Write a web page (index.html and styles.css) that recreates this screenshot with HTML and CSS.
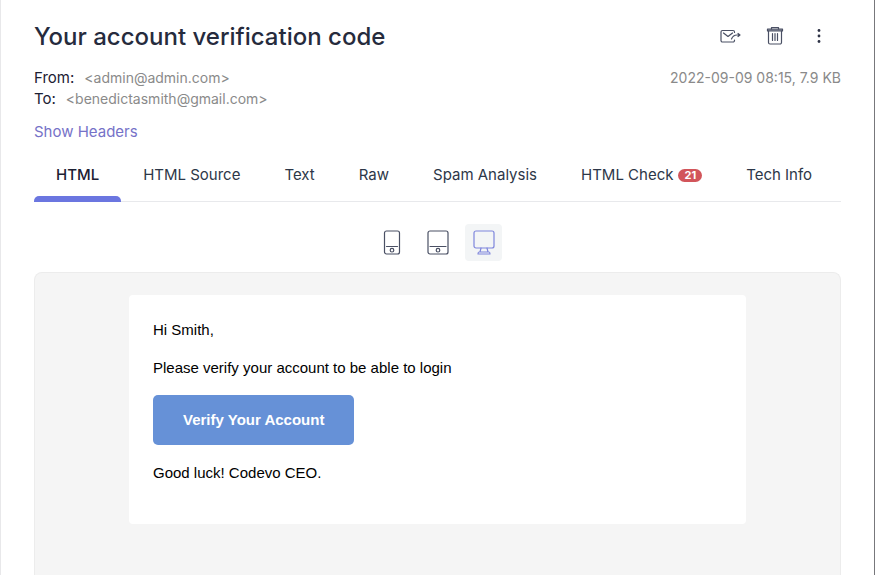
FILE: index.html
```html
<!DOCTYPE html>
<html lang="en">

<head>
    <meta charset="UTF-8">
    <meta name="viewport" content="width=device-width, initial-scale=1.0">
    <title>Your account verification code</title>
    <link rel="stylesheet" href="styles.css">
</head>

<body>
    <main class="message">
        <header class="message-header">
            <h1>Your account verification code</h1>
            <div class="actions">
                <button class="action" type="button" aria-label="Forward">
                    <svg width="22" height="16" viewBox="0 0 22 16">
                        <path d="M14.500 4.500V4a1.500 1.500 0 0 0-1.500-1.500H2.500A1.500 1.500 0 0 0 1 4v8.500A1.500 1.500 0 0 0 2.500 14H13a1.500 1.500 0 0 0 1.500-1.500V12" />
                        <path d="M3.500 5l4.500 3.500L12.500 5M11.500 11c1-2.500 2.500-4 5.500-4h2.500M18 5.500L20 7l-2 1.500" />
                    </svg>
                </button>
                <button class="action" type="button" aria-label="Delete">
                    <svg width="18" height="20" viewBox="0 0 18 20">
                        <path class="lid" d="M1.500 3h15v2h-15z" />
                        <path d="M5.500 3V1.500h7V3M2.500 5v11.500a1.500 1.500 0 0 0 1.500 1.500h10a1.500 1.500 0 0 0 1.500-1.500V5" />
                        <path d="M6.500 7.500v7M9 7.500v7M11.500 7.500v7" />
                    </svg>
                </button>
                <button class="action" type="button" aria-label="More">
                    <svg class="dots" width="4" height="16" viewBox="0 0 4 16">
                        <circle cx="2" cy="2.500" r="1.400" />
                        <circle cx="2" cy="8" r="1.400" />
                        <circle cx="2" cy="13.500" r="1.400" />
                    </svg>
                </button>
            </div>
        </header>

        <div class="meta">
            <dl class="people">
                <div>
                    <dt>From:</dt>
                    <dd>&lt;admin@admin.com&gt;</dd>
                </div>
                <div>
                    <dt>To:</dt>
                    <dd>&lt;benedictasmith@gmail.com&gt;</dd>
                </div>
            </dl>
            <span class="date">2022-09-09 08:15, 7.9 KB</span>
        </div>
        <a class="show-headers" href="#">Show Headers</a>

        <nav class="tabs">
            <a class="tab active" href="#">HTML</a>
            <a class="tab" href="#">HTML Source</a>
            <a class="tab" href="#">Text</a>
            <a class="tab" href="#">Raw</a>
            <a class="tab" href="#">Spam Analysis</a>
            <a class="tab" href="#">HTML Check <span class="badge">21</span></a>
            <a class="tab" href="#">Tech Info</a>
        </nav>

        <div class="devices">
            <button class="device" type="button" aria-label="Phone">
                <svg width="18" height="26" viewBox="0 0 18 26">
                    <rect x="1.500" y="1" width="15" height="23" rx="2" />
                    <path d="M3.500 16.500h11" />
                    <circle cx="9" cy="20.200" r="1.800" />
                </svg>
            </button>
            <button class="device" type="button" aria-label="Tablet">
                <svg width="22" height="26" viewBox="0 0 22 26">
                    <rect x="1" y="1" width="20" height="23" rx="2" />
                    <path d="M3 16.500h16" />
                    <circle cx="11" cy="20.200" r="1.800" />
                </svg>
            </button>
            <button class="device active" type="button" aria-label="Desktop">
                <svg width="22" height="26" viewBox="0 0 22 26">
                    <rect x="1" y="1" width="20" height="17" rx="2" />
                    <path d="M8 18l-1 4M14 18l1 4M6 22h10q1 0 1 2H5q0-2 1-2z" />
                </svg>
            </button>
        </div>

        <section class="preview">
            <article class="email">
                <p>Hi Smith,</p>
                <p>Please verify your account to be able to login</p>
                <a class="verify" href="#">Verify Your Account</a>
                <p>Good luck! Codevo CEO.</p>
            </article>
        </section>
    </main>
</body>

</html>
```

FILE: styles.css
```css
* {
    box-sizing: border-box;
}

body {
    margin: 0;
    background: #fff;
    font-family: Inter, "Liberation Sans", sans-serif;
    font-size: 15px;
    color: #2d3748;
}

.message {
    display: flex;
    flex-direction: column;
    height: 100vh;
    padding: 20px 33px 0;
    border-left: 1px solid #e8e8ea;
    border-right: 1px solid #77777b;
    overflow: hidden;
}

a {
    text-decoration: none;
}

button {
    padding: 0;
    border: none;
    background: none;
    cursor: pointer;
}

svg {
    display: block;
    fill: none;
    stroke: #4a5064;
    stroke-width: 1.2;
    stroke-linecap: round;
    stroke-linejoin: round;
}

.message-header {
    display: flex;
    justify-content: space-between;
    align-items: flex-start;
}

h1 {
    margin: 0;
    font-size: 24px;
    line-height: 34px;
    font-weight: 500;
    color: #262b3d;
}

.actions {
    display: flex;
    gap: 12px;
}

.action {
    display: flex;
    justify-content: center;
    align-items: center;
    width: 32px;
    height: 32px;
}

.action:last-child {
    margin-right: 6px;
}

.lid {
    fill: #8b8f9d;
}

.dots {
    fill: #2d3245;
    stroke: none;
}

.meta {
    display: flex;
    justify-content: space-between;
    margin-top: 13px;
    line-height: 21px;
}

.people {
    margin: 0;
}

.people div {
    display: flex;
    gap: 10px;
}

dt {
    font-weight: 400;
    color: #1c2033;
}

dd {
    margin: 0;
    font-size: 14px;
    color: #8a8a8a;
}

.date {
    font-size: 14px;
    color: #8a8a8a;
}

.show-headers {
    align-self: flex-start;
    margin-top: 12px;
    line-height: 21px;
    color: #7672c8;
}

.tabs {
    display: flex;
    margin-top: 6px;
    border-bottom: 1px solid #e8e9ec;
}

.tab {
    display: flex;
    align-items: center;
    gap: 5px;
    height: 54px;
    padding: 0 22px;
    margin-bottom: -1px;
    line-height: 20px;
    color: #2d3748;
    white-space: nowrap;
}

.tab.active {
    position: relative;
    font-weight: 500;
    color: #1c2033;
}

.tab.active::after {
    content: "";
    position: absolute;
    left: 0;
    right: 0;
    bottom: 0;
    height: 6px;
    border-radius: 5px 5px 0 0;
    background: #6b76e0;
}

.badge {
    padding: 0 6px;
    border-radius: 7px;
    background: #d2555a;
    font-size: 11px;
    line-height: 13px;
    font-weight: 700;
    color: #fff;
}

.devices {
    display: flex;
    justify-content: center;
    gap: 9px;
    margin: 22px 0 11px;
}

.device {
    display: flex;
    justify-content: center;
    align-items: center;
    width: 37px;
    height: 37px;
    border-radius: 4px;
}

.device.active {
    background: #f3f5f6;
}

.device.active svg {
    stroke: #7f86dc;
}

.preview {
    flex: 1;
    padding: 22px;
    border: 1px solid #ececec;
    border-bottom: none;
    border-radius: 8px 8px 0 0;
    background: #f5f5f5;
}

.email {
    max-width: 617px;
    margin: 0 auto;
    padding: 24px;
    border-radius: 4px;
    background: #fff;
    font-family: "Liberation Sans", Arial, sans-serif;
    line-height: 22px;
    color: #000;
}

.email p {
    margin: 0 0 16px;
}

.verify {
    display: inline-block;
    margin-bottom: 17px;
    padding: 14px 30px;
    border-radius: 5px;
    background: #6691d7;
    font-weight: 700;
    color: #fff;
}
```
